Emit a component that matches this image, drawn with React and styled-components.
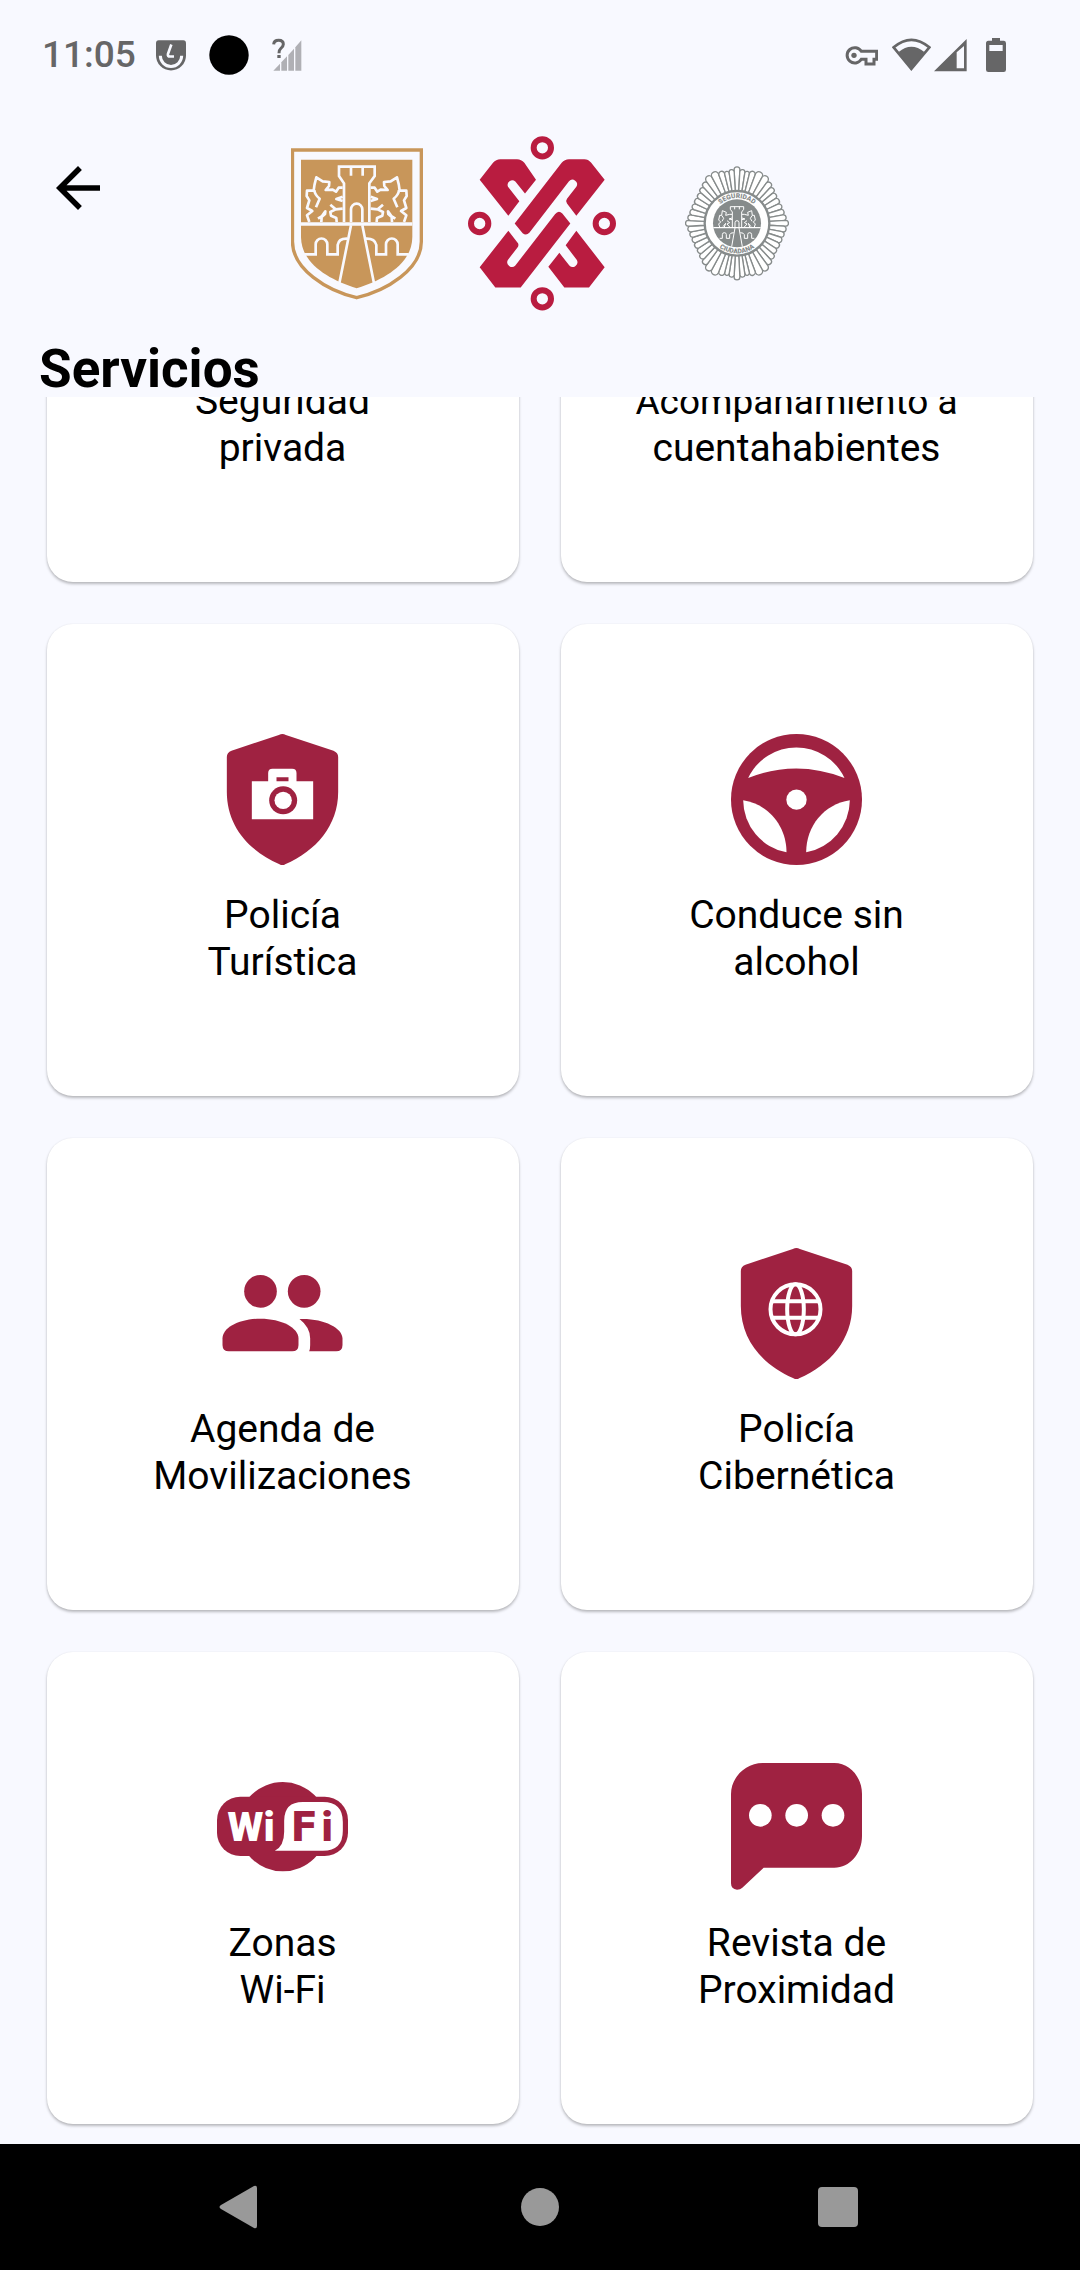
import React, { useLayoutEffect, useRef } from "react";
import styled, { createGlobalStyle } from "styled-components";

const MAROON = "#9f2241";
const PAGE = "#f8f9ff";
const STATUS = "#666667";
const GOLD = "#c8965a";
const SILVER = "#868b8b";

const GlobalStyle = createGlobalStyle`
  *, *::before, *::after { box-sizing: border-box; }
  body { margin: 0; background: ${PAGE}; font-family: Roboto, "Liberation Sans", sans-serif; color: #000; }
  svg { display: block; flex: none; }
`;

const Screen = styled.div`
  display: flex;
  flex-direction: column;
  height: 100vh;
  background: ${PAGE};
`;

const StatusBar = styled.div`
  display: flex;
  align-items: center;
  justify-content: space-between;
  height: 110px;
  padding: 0 74px 0 42px;
  color: ${STATUS};
`;

const StatusGroup = styled.div`
  display: flex;
  align-items: center;
  gap: ${(p) => p.$gap}px;
`;

const Clock = styled.span`
  font-size: 37px;
  line-height: 44px;
  font-weight: 500;
`;

const Header = styled.header`
  display: grid;
  grid-template-columns: 1fr auto 1fr;
  align-items: start;
  padding: 26px 45px 30px;
`;

const BackButton = styled.button`
  justify-self: start;
  margin-top: 19px;
  padding: 0;
  border: 0;
  background: none;
  color: #000;
`;

const Logos = styled.div`
  display: flex;
  align-items: center;
  gap: 45px;
`;

const BadgeSlot = styled.div`
  padding-left: 24px;
`;

const Title = styled.h1`
  margin: 0;
  padding: 0 39px;
  font-size: 53px;
  line-height: 56px;
  font-weight: 700;
`;

const ScrollArea = styled.main`
  flex: 1;
  min-height: 0;
  overflow-y: auto;
  scrollbar-width: none;
`;

const CardGrid = styled.div`
  display: grid;
  grid-template-columns: 1fr 1fr;
  gap: 42px;
  padding: 20px 47px;
`;

const Card = styled.button`
  display: flex;
  flex-direction: column;
  align-items: center;
  justify-content: center;
  gap: 27px;
  aspect-ratio: 1;
  min-width: 0;
  padding: 0 1px 0 0;
  border: 0;
  border-radius: 26px;
  background: #fff;
  box-shadow: 0 2px 3px rgba(0, 0, 0, 0.26), 0 0 2px rgba(0, 0, 0, 0.06);
  color: #000;
  font-family: inherit;
`;

const CardLabel = styled.span`
  display: flex;
  flex-direction: column;
  font-size: 39px;
  line-height: 47px;
  text-align: center;
`;

const LabelLine = styled.span`
  font-size: ${(p) => (p.$long ? 37 : 39)}px;
`;

const NavBar = styled.nav`
  display: flex;
  justify-content: center;
  height: 126px;
  background: #000;
`;

const NavButton = styled.button`
  display: flex;
  align-items: center;
  justify-content: center;
  width: 300px;
  padding: 0;
  border: 0;
  background: none;
  color: #999;
`;

/* ---------- status bar drawings ---------- */

const AppBadge = () => (
  <svg width="30" height="31" viewBox="465 119 90 92" aria-hidden="true">
    <path d="M473 119H547Q555 119 555 128V165A45 45 0 0 1 465 165V128Q465 119 473 119Z" fill="currentColor" />
    <path d="M478 166A32 32 0 0 0 542 166" fill="none" stroke={PAGE} strokeWidth="9" />
    <path d="M511 132L501 160Q499 168 507 168H519" fill="none" stroke={PAGE} strokeWidth="8" />
  </svg>
);

const Dot = () => (
  <svg width="40" height="40" viewBox="0 0 40 40" aria-hidden="true">
    <circle cx="20" cy="20" r="19.7" fill="#000" />
  </svg>
);

const NoSignal = () => (
  <svg width="30" height="34" viewBox="815 114 90 102" aria-hidden="true">
    <g fill="#b0b0b5">
      <path d="M819 212L839 191V212Z" />
      <path d="M843 187L860 169V212H843Z" />
      <path d="M864 165L881 146V212H864Z" />
      <path d="M885 142L903 121V212H885Z" />
    </g>
    <path d="M820 133Q821 121 835 121Q849 121 849 133Q849 140 841 146Q836 150 836 160" fill="none" stroke="currentColor" strokeWidth="9" />
    <rect x="831" y="165" width="10" height="9" fill="currentColor" />
  </svg>
);

const KeyIcon = () => (
  <svg width="33" height="34" viewBox="138 114 99 102" aria-hidden="true">
    <path d="M187 154H233V178H225V192H201V178H187A23 23 0 1 1 187 154Z" fill="none" stroke="currentColor" strokeWidth="9" />
    <circle cx="165" cy="166" r="8" fill="currentColor" />
  </svg>
);

const WifiIcon = () => (
  <svg width="39" height="34" viewBox="276 113 117 102" aria-hidden="true">
    <path d="M281 141Q334 96 388 141L334 206Z" fill="none" stroke="currentColor" strokeWidth="8" />
    <path d="M296 155Q334 124 373 155L334 210Z" fill="currentColor" />
  </svg>
);

const SignalIcon = () => (
  <svg width="33" height="34" viewBox="403 113 99 102" aria-hidden="true">
    <path d="M403 213L501 116V213ZM471 156V204H493V137Z" fill="currentColor" fillRule="evenodd" />
  </svg>
);

const BatteryIcon = () => (
  <svg width="20" height="34" viewBox="558 114 60 102" aria-hidden="true">
    <path d="M576 114H600V122H612Q618 122 618 130V209Q618 216 611 216H565Q558 216 558 209V130Q558 122 565 122H576ZM568 135V153H608V135Z" fill="currentColor" fillRule="evenodd" />
  </svg>
);

/* ---------- header drawings ---------- */

const ArrowBack = () => (
  <svg width="66" height="66" viewBox="0 0 24 24" aria-hidden="true">
    <path d="M20 11H7.83l5.59-5.59L12 4l-8 8 8 8 1.41-1.41L7.83 13H20v-2z" fill="currentColor" />
  </svg>
);

const Lion = () => (
  <path d="M118 306L111 286L127 273L111 264L118 241L110 228L111 212H131Q132 196 139 172L158 184L178 186L177 198L167 210L188 209L198 215L206 203H218M133 210Q134 224 149 236L138 262M218 230L199 237L218 243M181 254L197 268L218 266M197 268L181 276L183 287L199 294L200 306M144 296L156 288L166 274L165 282L155 291L154 306" />
);

const CityShield = () => (
  <svg width="132" height="152" viewBox="63 84 396 456" role="img" aria-label="Escudo">
    <path d="M67.500 90H454V365C454 448 350 512 260 533C170 512 67.500 448 67.500 365Z" fill="none" stroke={GOLD} strokeWidth="10" />
    <path d="M93 119H427V350C427 430 345 478 260 505C175 478 93 430 93 350Z" fill={GOLD} />
    <g fill="none" stroke={PAGE} strokeWidth="8">
      <path d="M222 306V190L207 168V140H314V168L298 190V306M243 140V167M278 140V167" />
      <path d="M243 306V268A17 17 0 0 1 277 268V306" />
      <path d="M93 312H427" strokeWidth="10" />
      <path d="M243 316L208 490M277 316L312 490" />
      <path d="M104 403H137V373A17 17 0 0 1 172 373V403H203V375Q206 355 232 356" />
      <path d="M416 403H383V373A17 17 0 0 0 348 373V403H319V375Q314 355 288 356" />
      <g strokeWidth="8" strokeLinejoin="round">
        <Lion />
        <g transform="translate(520 0) scale(-1 1)">
          <Lion />
        </g>
      </g>
    </g>
  </svg>
);

const CityMark = () => (
  <svg width="148" height="175" viewBox="55 50 444 524" role="img" aria-label="CDMX">
    <g fill="#b91c40">
      <path d="M90 181L130 130Q139 119 152 119H202Q215 119 224 130L259 181L226 222L197 186A14 14 0 0 0 175 202L209 245L176 289Z" />
      <path d="M195 312L336 130Q345 119 358 119H404Q416 119 424 129L465 181L380 289L352 252Q347 244 352 238L380 202A14 14 0 0 0 358 185L239 340Q229 350 219 341Z" />
      <path d="M176 334L205 371Q208 377 204 383L175 421A14 14 0 0 0 197 438L316 284Q327 270 338 282L362 312L213 504H137L90 443Z" />
      <path d="M380 334L465 443L418 504H344L296 442L329 400L359 438A14 14 0 0 0 381 421L348 377Z" />
    </g>
    <g fill="none" stroke="#b91c40" strokeWidth="18">
      <circle cx="278" cy="85" r="26" />
      <circle cx="90" cy="312" r="26" />
      <circle cx="464" cy="312" r="26" />
      <circle cx="278" cy="538" r="26" />
    </g>
  </svg>
);

const QUADRANT = [
  [0, -164], [17, -157], [31, -153], [45, -151], [67, -147], [86, -135], [97, -117],
  [105, -101], [113, -84], [121, -67], [129, -50], [136, -34], [142, -17], [149, 0],
];

const TIPS = [
  ...QUADRANT,
  ...QUADRANT.slice(0, -1).reverse().map(([x, y]) => [x, -y]),
  ...QUADRANT.slice(1).map(([x, y]) => [-x, -y]),
  ...QUADRANT.slice(1, -1).reverse().map(([x, y]) => [-x, y]),
];

const RAYS = TIPS.map(([x, y], i) => {
  const a = Math.atan2(y, x);
  const near = (j) => {
    const [nx, ny] = TIPS[(j + TIPS.length) % TIPS.length];
    let d = Math.atan2(ny, nx) - a;
    if (d > Math.PI) d -= 2 * Math.PI;
    if (d < -Math.PI) d += 2 * Math.PI;
    return d / 2;
  };
  const r = Math.hypot(x, y) - 3;
  const at = (radius, angle) => `${(radius * Math.cos(angle)).toFixed(1)} ${(radius * Math.sin(angle)).toFixed(1)}`;
  const from = a + near(i - 1);
  const to = a + near(i + 1);
  const cap = ((to - from) * r) / 2;
  return `M${at(96, from)}L${at(r, from)}A${cap.toFixed(1)} ${cap.toFixed(1)} 0 0 1 ${at(r, to)}L${at(96, to)}Z`;
});

const PoliceBadge = () => (
  <svg width="104" height="115" viewBox="-156 -172 312 345" role="img" aria-label="Seguridad Ciudadana">
    <g fill="#fff" stroke={SILVER} strokeWidth="4">
      {RAYS.map((d) => (
        <path key={d} d={d} />
      ))}
    </g>
    <circle r="97" fill="#fff" stroke={SILVER} strokeWidth="7" />
    <circle r="72" fill={SILVER} />
    <g fill="none" stroke="#fff" strokeWidth="3">
      <path d="M-71 13H71" strokeWidth="4" />
      <path d="M-14 12V-34L-20 -42V-50H20V-42L14 -34V12M-7 -50V-42M7 -50V-42M-6 12V-2A6 6 0 0 1 6 -2V12" />
      <path d="M-6 14L-16 70M6 14L16 70" />
      <path d="M-52 45H-44V34A6 6 0 0 1 -32 34V45H-22V34Q-20 28 -10 28M52 45H44V34A6 6 0 0 0 32 34V45H22V34Q20 28 10 28" />
      <path id="badge-lion" d="M-52 11L-55 2L-49 -4L-55 -10L-52 -24H-46L-44 -38L-32 -33L-34 -24L-22 -27H-15M-46 -24L-40 -15L-45 -6M-15 -16L-24 -13L-15 -11M-30 -8L-22 -2L-30 2L-22 11M-42 10L-34 0L-38 11" />
      <use href="#badge-lion" transform="scale(-1 1)" />
    </g>
    <path id="badge-top" d="M-76 0A76 76 0 0 1 76 0" fill="none" />
    <path id="badge-bottom" d="M-90 0A90 90 0 0 0 90 0" fill="none" />
    <g fill={SILVER} fontSize="20" fontWeight="900" textAnchor="middle" fontFamily="Roboto, sans-serif">
      <text>
        <textPath href="#badge-top" startOffset="50%">SEGURIDAD</textPath>
      </text>
      <text>
        <textPath href="#badge-bottom" startOffset="50%">CIUDADANA</textPath>
      </text>
    </g>
  </svg>
);

/* ---------- service drawings ---------- */

const ServiceSvg = ({ box, children }) => (
  <svg width="131" height="131" viewBox={box} fill={MAROON} aria-hidden="true">
    {children}
  </svg>
);

const Shield = ({ children }) => (
  <ServiceSvg box="112.5 101 393 393">
    <path d="M298 104Q309 98 319 104L462 151Q476 157 476 170V275C476 375 410 452 317 492Q309 497 300 492C205 450 142 375 142 275V170Q142 156 156 151Z" />
    {children}
  </ServiceSvg>
);

const CameraShield = () => (
  <Shield>
    <path d="M217 243H266V218Q266 205 279 205H338Q351 205 351 218V243H401V357H217ZM291 231V243H327V231Z" fill="#fff" fillRule="evenodd" />
    <circle cx="311" cy="300" r="42" />
    <circle cx="311" cy="300" r="26" fill="#fff" />
  </Shield>
);

const GlobeShield = () => (
  <Shield>
    <g fill="none" stroke="#fff" strokeWidth="12">
      <circle cx="306" cy="285" r="75" />
      <ellipse cx="306" cy="285" rx="25" ry="75" />
      <path d="M236 261H376M236 310H376" />
    </g>
  </Shield>
);

const SteeringWheel = () => (
  <ServiceSvg box="154.5 101 393 393">
    <circle cx="351" cy="297.500" r="196.500" />
    <g fill="#fff">
      <path d="M206 233A160 160 0 0 1 495 233Q350 176 206 233Z" />
      <path d="M191 300A160 160 0 0 0 321 456C321 378 268 312 191 300Z" />
      <path d="M511 300A160 160 0 0 1 380 456C380 378 433 312 511 300Z" />
      <circle cx="351" cy="298" r="30.500" />
    </g>
  </ServiceSvg>
);

const People = () => (
  <ServiceSvg box="232.5 54 393 393">
    <circle cx="363" cy="184" r="49" />
    <circle cx="494" cy="184" r="49" />
    <path d="M249 325C249 293 300 266 363 266S477 293 477 325V345Q477 364 458 364H268Q249 364 249 345Z" />
    <path d="M480 267C550 264 609 293 609 325V345Q609 364 590 364H509Q512 358 512 345V325Q512 292 480 267Z" />
  </ServiceSvg>
);

const WifiZone = () => (
  <ServiceSvg box="112.5 66 393 393">
    <circle cx="310" cy="260" r="134" />
    <rect x="112.500" y="170" width="393" height="178" rx="70" />
    <path d="M286 332Q314 318 314 275V242Q314 186 370 186H430Q490 186 490 246V272Q490 332 430 332Z" fill="#fff" />
    <g fontFamily="Roboto, sans-serif" fontSize="124" fontWeight="900">
      <text x="144" y="303" fill="#fff">Wi</text>
      <text y="303">
        <tspan x="333" fontFamily="'DejaVu Sans', sans-serif" fontSize="121" fontWeight="700">F</tspan>
        <tspan x="426">i</tspan>
      </text>
    </g>
  </ServiceSvg>
);

const ChatBubble = () => (
  <ServiceSvg box="0 0 393 393">
    <path d="M95 3H310C356 3 393 45 393 96V222C393 275 356 317 310 317H98L34 377Q28 383 18 383Q0 381 0 364V96C0 45 45 3 95 3Z" />
    <g fill="#fff">
      <circle cx="88" cy="160" r="34" />
      <circle cx="197" cy="160" r="34" />
      <circle cx="306" cy="160" r="34" />
    </g>
  </ServiceSvg>
);

const LONG_LINE = 15;

const SERVICES = [
  { lines: ["Seguridad", "privada"], Icon: Shield },
  { lines: ["Acompañamiento a", "cuentahabientes"], Icon: Shield },
  { lines: ["Policía", "Turística"], Icon: CameraShield },
  { lines: ["Conduce sin", "alcohol"], Icon: SteeringWheel },
  { lines: ["Agenda de", "Movilizaciones"], Icon: People },
  { lines: ["Policía", "Cibernética"], Icon: GlobeShield },
  { lines: ["Zonas", "Wi-Fi"], Icon: WifiZone },
  { lines: ["Revista de", "Proximidad"], Icon: ChatBubble },
];

export default function App() {
  const listRef = useRef(null);

  useLayoutEffect(() => {
    listRef.current.scrollTop = listRef.current.scrollHeight;
  }, []);

  return (
    <Screen>
      <GlobalStyle />
      <StatusBar>
        <StatusGroup $gap={20}>
          <Clock>11:05</Clock>
          <StatusGroup $gap={23}>
            <AppBadge />
            <Dot />
            <NoSignal />
          </StatusGroup>
        </StatusGroup>
        <StatusGroup $gap={3}>
          <StatusGroup $gap={14}>
            <KeyIcon />
            <WifiIcon />
          </StatusGroup>
          <StatusGroup $gap={19}>
            <SignalIcon />
            <BatteryIcon />
          </StatusGroup>
        </StatusGroup>
      </StatusBar>
      <Header>
        <BackButton type="button" aria-label="Regresar">
          <ArrowBack />
        </BackButton>
        <Logos>
          <CityShield />
          <CityMark />
          <BadgeSlot>
            <PoliceBadge />
          </BadgeSlot>
        </Logos>
      </Header>
      <Title>Servicios</Title>
      <ScrollArea ref={listRef}>
        <CardGrid>
          {SERVICES.map(({ lines, Icon }) => (
            <Card key={lines.join(" ")} type="button">
              <Icon />
              <CardLabel>
                {lines.map((line) => (
                  <LabelLine key={line} $long={line.length > LONG_LINE}>
                    {line}
                  </LabelLine>
                ))}
              </CardLabel>
            </Card>
          ))}
        </CardGrid>
      </ScrollArea>
      <NavBar>
        <NavButton type="button" aria-label="Atrás">
          <svg width="48" height="48" viewBox="0 0 48 48" fill="currentColor" aria-hidden="true">
            <path d="M38 3Q41 2 41 5V43Q41 46 38 45L5 26Q2 24 5 22Z" />
          </svg>
        </NavButton>
        <NavButton type="button" aria-label="Inicio">
          <svg width="48" height="48" viewBox="0 0 48 48" fill="currentColor" aria-hidden="true">
            <circle cx="24" cy="24" r="19" />
          </svg>
        </NavButton>
        <NavButton type="button" aria-label="Recientes">
          <svg width="48" height="48" viewBox="0 0 48 48" fill="currentColor" aria-hidden="true">
            <rect x="2" y="4" width="40" height="40" rx="4" />
          </svg>
        </NavButton>
      </NavBar>
    </Screen>
  );
}
